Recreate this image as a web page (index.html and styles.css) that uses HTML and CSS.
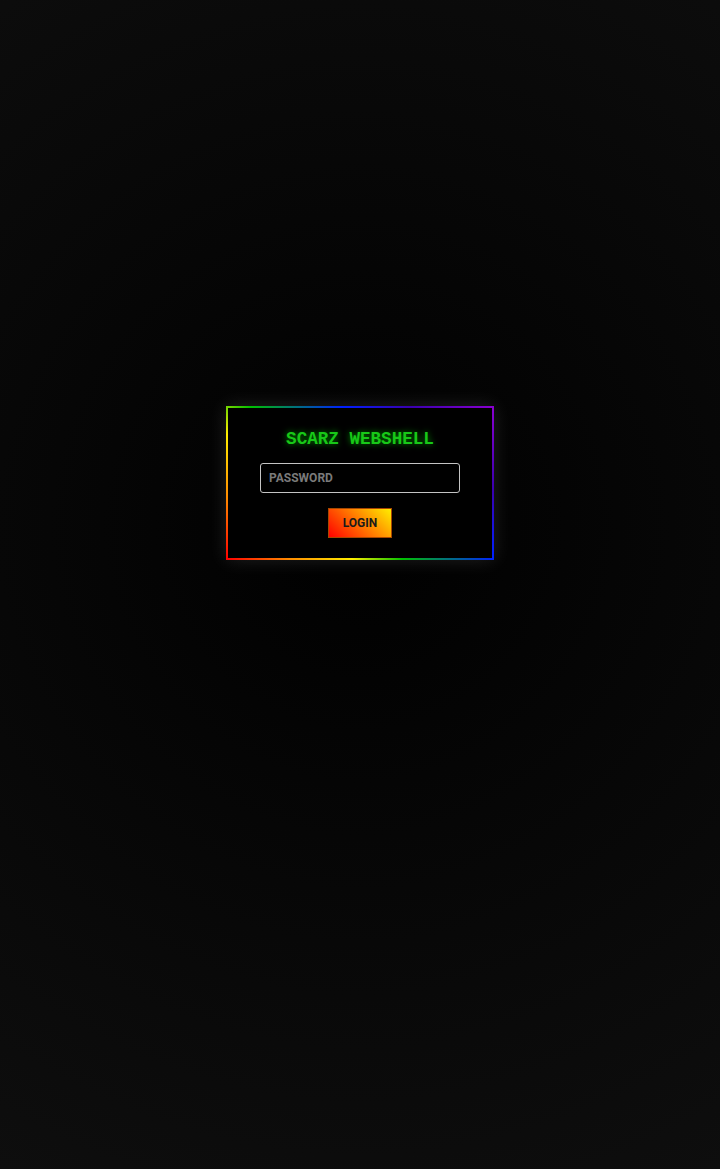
FILE: index.html
```html
<!DOCTYPE html>
<html>
<head>
<meta charset="utf-8">
<title>SCARZ WEBSHELL</title>
<link rel="stylesheet" href="styles.css">
</head>
<body>
<main class="page">
  <form class="login-box">
    <h1 class="title">SCARZ WEBSHELL</h1>
    <input class="pass" type="password" placeholder="PASSWORD">
    <button class="btn" type="button">LOGIN</button>
  </form>
</main>
</body>
</html>
```
FILE: styles.css
```css
html, body {
  margin: 0;
  padding: 0;
}
body {
  min-height: 1169px;
  background: radial-gradient(circle at 50% 45%, #000 0%, #050505 35%, #0e0e0e 100%);
  font-family: Roboto, "Liberation Sans", sans-serif;
}
.page {
  display: flex;
  justify-content: center;
  padding-top: 406px;
}
.login-box {
  display: flex;
  flex-direction: column;
  align-items: center;
  width: 200px;
  padding: 21px 32px 20px;
  background: #000;
  border: 2px solid;
  border-image: linear-gradient(45deg, #ff0000 0%, #ff8c00 15%, #ffee00 30%, #00c000 42%, #0020ff 64%, #3a00b0 80%, #8a00d0 100%) 1;
  box-shadow: 0 0 18px rgba(255, 255, 255, 0.12);
}
.title {
  margin: 0 0 14px;
  font-family: "Courier New", Courier, "Nimbus Mono PS", "Nimbus Mono L", FreeMono, "Liberation Mono", monospace;
  font-size: 17.6px;
  line-height: 20px;
  font-weight: bold;
  color: #18c818;
  text-shadow: 0 0 6px rgba(0, 255, 0, 0.55);
  letter-spacing: 0;
}
.pass {
  box-sizing: border-box;
  width: 200px;
  height: 30px;
  padding: 0 8px;
  background: #000;
  border: 1px solid #c4c4c4;
  border-radius: 3px;
  color: #ddd;
  font-family: Roboto, "Liberation Sans", sans-serif;
  font-weight: bold;
  font-size: 12px;
  outline: none;
}
.pass::placeholder {
  color: #7a7a7a;
  opacity: 1;
}
.btn {
  box-sizing: border-box;
  margin-top: 15px;
  width: 64px;
  height: 30px;
  padding: 0;
  border: 1px solid #a84800;
  background: linear-gradient(45deg, #ff0000, #ffee00);
  color: #1a1a1a;
  font-family: Roboto, "Liberation Sans", sans-serif;
  font-weight: bold;
  font-size: 12px;
  cursor: pointer;
}
```
